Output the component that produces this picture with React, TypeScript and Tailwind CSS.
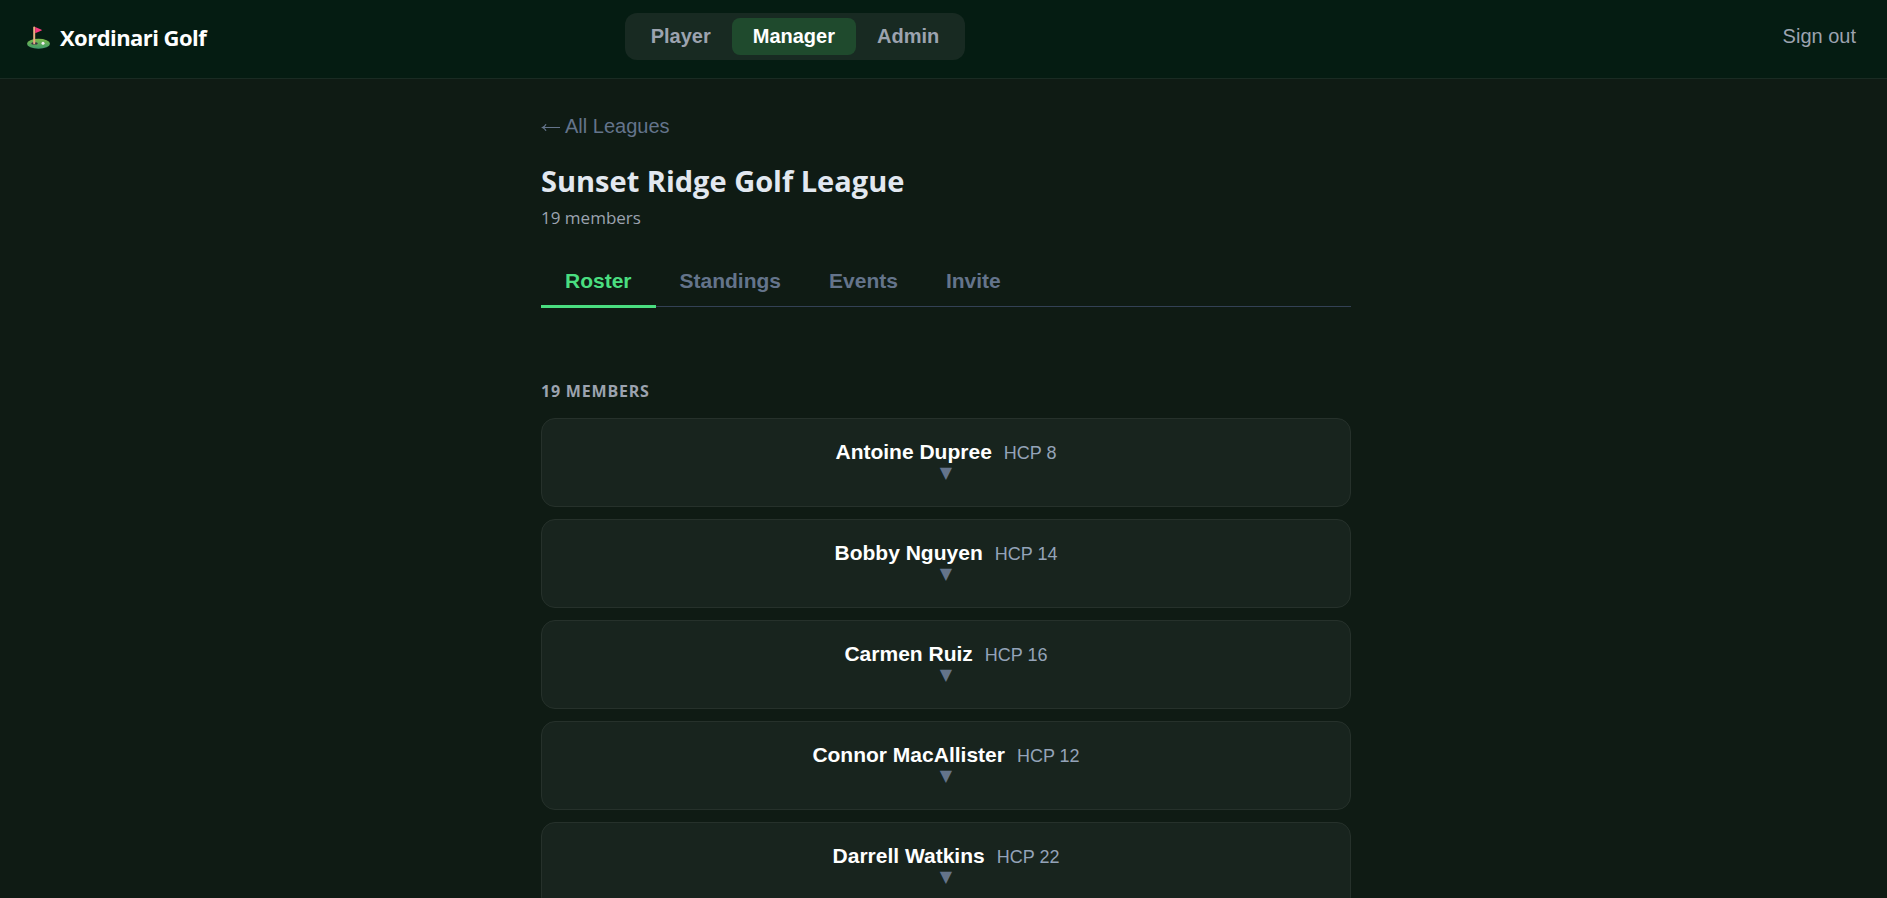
const members = [
  { name: "Antoine Dupree", hcp: 8 },
  { name: "Bobby Nguyen", hcp: 14 },
  { name: "Carmen Ruiz", hcp: 16 },
  { name: "Connor MacAllister", hcp: 12 },
  { name: "Darrell Watkins", hcp: 22 },
];

const roles = ["Player", "Manager", "Admin"];
const tabs = ["Roster", "Standings", "Events", "Invite"];

function GolfFlag() {
  return (
    <svg viewBox="0 0 24 24" className="h-6 w-6" aria-hidden="true">
      <defs>
        <linearGradient id="green" x1="0" y1="0" x2="0" y2="1">
          <stop offset="0" stopColor="#7dba4a" />
          <stop offset="1" stopColor="#3f9b6c" />
        </linearGradient>
      </defs>
      <ellipse cx="12.5" cy="17.8" rx="11.5" ry="5" fill="url(#green)" />
      <ellipse cx="8.5" cy="17.4" rx="3.2" ry="1.2" fill="#3d3144" />
      <rect x="7.2" y="0.5" width="2" height="17.8" rx="1" fill="#e8ad80" />
      <path d="M9.2 1 15.6 3.8Q16.2 4.2 15.6 4.6L9.2 7.2Z" fill="#f8397c" />
      <circle cx="17" cy="17.2" r="1.5" fill="#f4eef6" />
    </svg>
  );
}

function BackArrow() {
  return (
    <svg
      viewBox="0 0 19 24"
      className="h-6 w-5"
      fill="none"
      stroke="currentColor"
      strokeWidth="1.2"
      aria-hidden="true"
    >
      <path d="M1 13.5H18.5M4.5 10.2Q3.4 12.4 1 13.5Q3.4 14.6 4.5 16.8" />
    </svg>
  );
}

function MemberCard({ name, hcp }: { name: string; hcp: number }) {
  return (
    <button
      type="button"
      className="flex h-[89px] w-full flex-col items-center rounded-[14px] border border-[#26312b] bg-[#18241e] pt-[21px] font-['Liberation_Sans',sans-serif]"
    >
      <span className="flex items-baseline gap-3 leading-6">
        <span className="text-[21px] font-bold text-white">{name}</span>
        <span className="text-[18px] text-[#94a3b8]">HCP {hcp}</span>
      </span>
      <span className="font-['DejaVu_Sans',sans-serif] text-[16px] leading-4 text-[#64748b]">▼</span>
    </button>
  );
}

export default function App() {
  return (
    <div className="h-screen overflow-hidden bg-[#0f1b14] font-['Open_Sans',sans-serif]">
      <header className="flex items-start border-b border-[#1a2b23] bg-[#051c12] px-[26px] pt-[13px] pb-[18px]">
        <div className="flex h-[47px] items-center gap-2.5 pt-0.5 text-[22px] font-bold text-white">
          <GolfFlag />
          <span className="tracking-tight">Xordinari Golf</span>
        </div>
        <div className="grow-[17]" />
        <nav className="flex rounded-xl bg-[#182a22] p-[5px] font-['Liberation_Sans',sans-serif]">
          {roles.map((r) => (
            <button
              key={r}
              type="button"
              className={
                r === "Manager"
                  ? "h-[37px] rounded-lg bg-[#1f4a2d] px-[21px] pb-0.5 text-[20px] font-bold text-white"
                  : "h-[37px] rounded-lg px-[21px] pb-0.5 text-[20px] font-bold text-[#9ca3af]"
              }
            >
              {r}
            </button>
          ))}
        </nav>
        <div className="grow-[33]" />
        <button
          type="button"
          className="h-[47px] px-[5px] pb-0.5 font-['Liberation_Sans',sans-serif] text-[20px] text-[#9ca3af]"
        >
          Sign out
        </button>
      </header>

      <main className="flex justify-center pl-[5px]">
        <div className="w-full max-w-[810px] pt-[35px]">
          <a
            href="#leagues"
            className="flex gap-1 font-['Liberation_Sans',sans-serif] text-[20px] leading-6 text-[#64748b]"
          >
            <BackArrow />
            <span>All Leagues</span>
          </a>
          <h1 className="mt-[23px] text-[29px] leading-10 font-bold text-[#e2e8f0]">
            Sunset Ridge Golf League
          </h1>
          <p className="mt-[5px] text-[17px] leading-6 text-[#9ca3af]">19 members</p>

          <div className="mt-[26px] flex border-b border-[#334155] font-['Liberation_Sans',sans-serif]">
            {tabs.map((t) => (
              <button
                key={t}
                type="button"
                className={
                  t === "Roster"
                    ? "-mb-0.5 h-[52px] border-b-3 border-[#4ade80] px-6 text-[21px] font-bold text-[#4ade80]"
                    : "-mb-0.5 h-[52px] border-b-3 border-transparent px-6 text-[21px] font-bold text-[#64748b]"
                }
              >
                {t}
              </button>
            ))}
          </div>

          <h2 className="mt-[72px] text-[16px] leading-6 font-bold tracking-wider text-[#9ca3af]">
            19 MEMBERS
          </h2>
          <div className="mt-[15px] flex flex-col gap-3">
            {members.map((m) => (
              <MemberCard key={m.name} name={m.name} hcp={m.hcp} />
            ))}
          </div>
        </div>
      </main>
    </div>
  );
}
